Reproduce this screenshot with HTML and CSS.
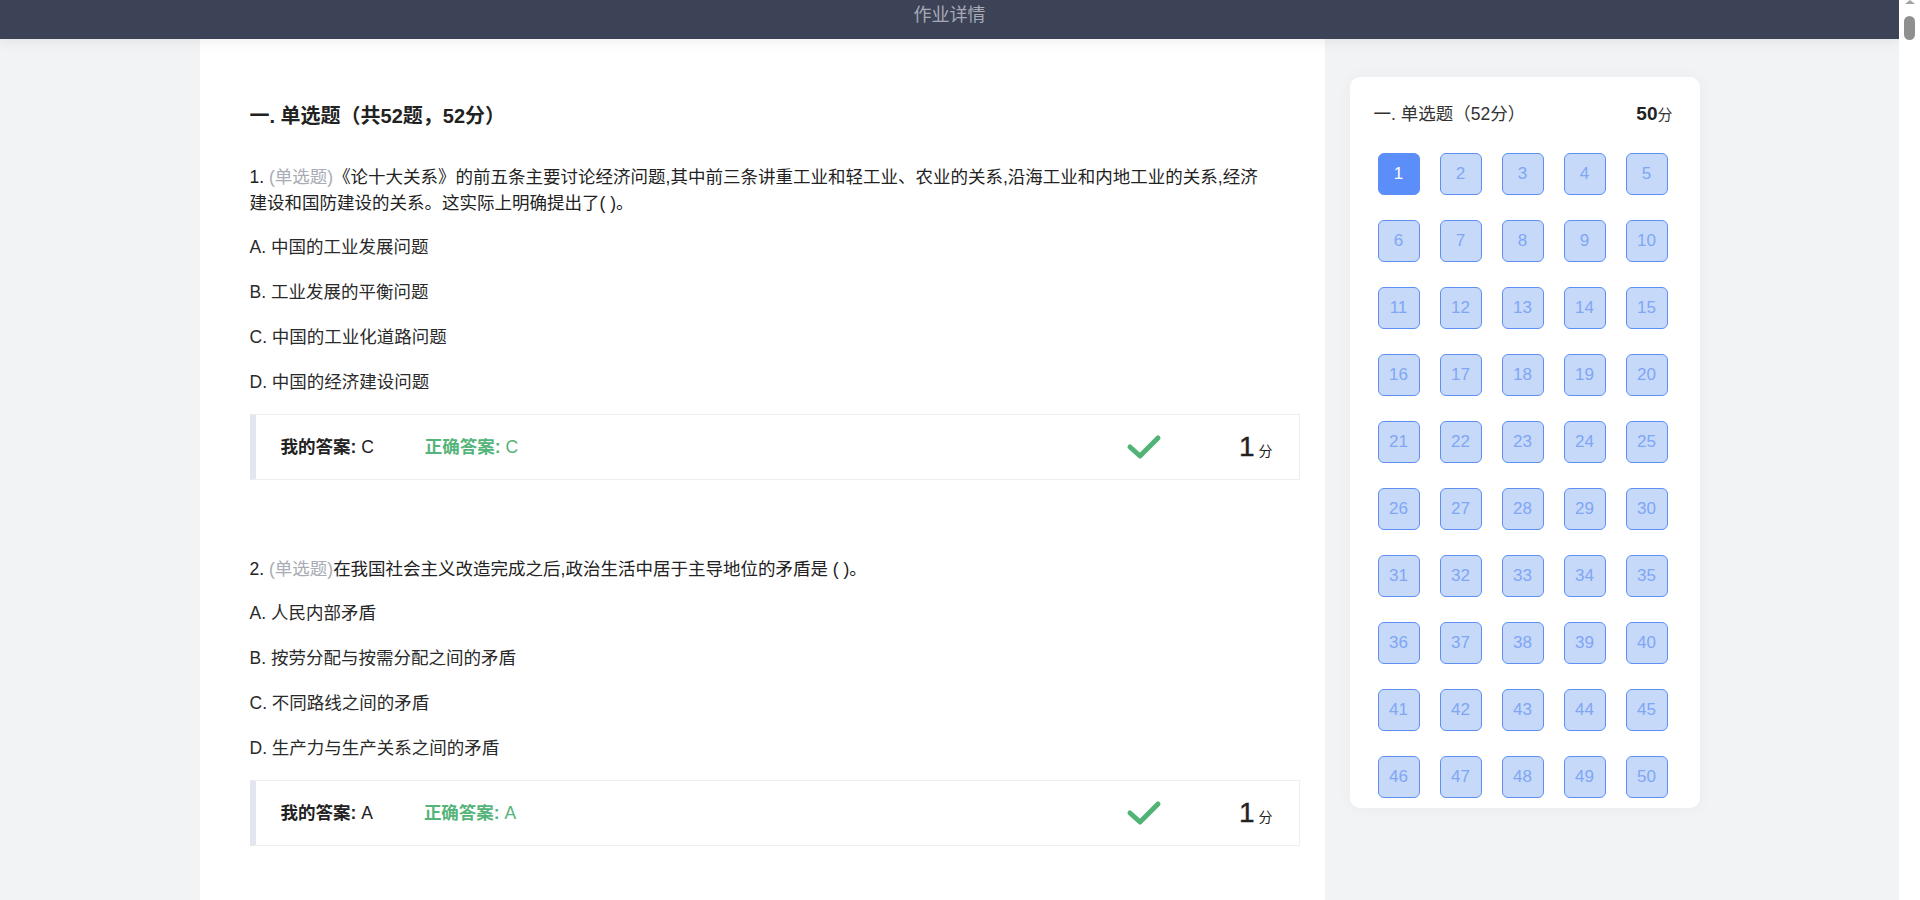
FILE: index.html
```html
<!DOCTYPE html>
<html lang="zh-CN">
<head>
    <meta charset="UTF-8">
    <meta name="viewport" content="width=device-width, initial-scale=1.0">
    <title>作业详情</title>
    <link rel="stylesheet" href="styles.css">
</head>
<body>
    <div class="header">作业详情</div>

    <div class="wrap">
        <div class="main">
            <h2 class="type-title">一. 单选题（共52题，52分）</h2>

            <div class="question">
                <div class="q-title"><span>1. </span><span class="q-type">(单选题)</span><span>《论十大关系》的前五条主要讨论经济问题,其中前三条讲重工业和轻工业、农业的关系,沿海工业和内地工业的关系,经济建设和国防建设的关系。这实际上明确提出了( )。</span></div>
                <div class="option">A. 中国的工业发展问题</div>
                <div class="option">B. 工业发展的平衡问题</div>
                <div class="option">C. 中国的工业化道路问题</div>
                <div class="option">D. 中国的经济建设问题</div>
                <div class="answer">
                    <span class="my-answer"><b>我的答案:</b> C</span>
                    <span class="right-answer"><b>正确答案:</b> C</span>
                    <svg class="check" width="38" height="28" viewBox="0 0 38 28">
                        <polyline points="5,14 15,23 33,5" fill="none" stroke="#52b377" stroke-width="5" stroke-linecap="round" stroke-linejoin="round"/>
                    </svg>
                    <span class="score">1<small>分</small></span>
                </div>
            </div>

            <div class="question">
                <div class="q-title"><span>2. </span><span class="q-type">(单选题)</span><span>在我国社会主义改造完成之后,政治生活中居于主导地位的矛盾是 ( )。</span></div>
                <div class="option">A. 人民内部矛盾</div>
                <div class="option">B. 按劳分配与按需分配之间的矛盾</div>
                <div class="option">C. 不同路线之间的矛盾</div>
                <div class="option">D. 生产力与生产关系之间的矛盾</div>
                <div class="answer">
                    <span class="my-answer"><b>我的答案:</b> A</span>
                    <span class="right-answer"><b>正确答案:</b> A</span>
                    <svg class="check" width="38" height="28" viewBox="0 0 38 28">
                        <polyline points="5,14 15,23 33,5" fill="none" stroke="#52b377" stroke-width="5" stroke-linecap="round" stroke-linejoin="round"/>
                    </svg>
                    <span class="score">1<small>分</small></span>
                </div>
            </div>
        </div>

        <div class="side">
            <div class="side-head">
                <span>一. 单选题（52分）</span>
                <span class="side-score"><b>50</b>分</span>
            </div>
            <div class="num-grid">
                <span class="num current">1</span>
                <span class="num">2</span>
                <span class="num">3</span>
                <span class="num">4</span>
                <span class="num">5</span>
                <span class="num">6</span>
                <span class="num">7</span>
                <span class="num">8</span>
                <span class="num">9</span>
                <span class="num">10</span>
                <span class="num">11</span>
                <span class="num">12</span>
                <span class="num">13</span>
                <span class="num">14</span>
                <span class="num">15</span>
                <span class="num">16</span>
                <span class="num">17</span>
                <span class="num">18</span>
                <span class="num">19</span>
                <span class="num">20</span>
                <span class="num">21</span>
                <span class="num">22</span>
                <span class="num">23</span>
                <span class="num">24</span>
                <span class="num">25</span>
                <span class="num">26</span>
                <span class="num">27</span>
                <span class="num">28</span>
                <span class="num">29</span>
                <span class="num">30</span>
                <span class="num">31</span>
                <span class="num">32</span>
                <span class="num">33</span>
                <span class="num">34</span>
                <span class="num">35</span>
                <span class="num">36</span>
                <span class="num">37</span>
                <span class="num">38</span>
                <span class="num">39</span>
                <span class="num">40</span>
                <span class="num">41</span>
                <span class="num">42</span>
                <span class="num">43</span>
                <span class="num">44</span>
                <span class="num">45</span>
                <span class="num">46</span>
                <span class="num">47</span>
                <span class="num">48</span>
                <span class="num">49</span>
                <span class="num">50</span>
            </div>
        </div>
    </div>
</body>
</html>
```

FILE: styles.css
```css
html {
    background-color: #fff;
}

body {
    margin: 0 21px 0 0;
    background-color: #f2f3f5;
    font-family: "Liberation Sans", "Noto Sans CJK SC", sans-serif;
    color: #222;
}

/* window scrollbar strip */
body::before {
    content: "";
    position: fixed;
    top: 0;
    right: 5px;
    border-left: 5px solid transparent;
    border-right: 5px solid transparent;
    border-bottom: 4px solid #a3a3a3;
}

body::after {
    content: "";
    position: fixed;
    top: 16px;
    right: 5px;
    width: 11px;
    height: 24px;
    border-radius: 6px;
    background-color: #8f8f8f;
}

.header {
    position: relative;
    z-index: 2;
    height: 39px;
    line-height: 30px;
    text-align: center;
    font-size: 18px;
    color: #a7aab6;
    background-color: #3d4356;
    box-shadow: 0 3px 12px rgba(0, 0, 0, 0.07);
}

.wrap {
    display: flex;
    align-items: flex-start;
    gap: 25px;
    width: 1500px;
    margin: 0 auto;
}

/* left: question list */
.main {
    width: 1125px;
    min-height: 1200px;
    box-sizing: border-box;
    padding: 64px 25px 40px 50px;
    background-color: #fff;
}

.type-title {
    margin: 0 0 35px;
    font-size: 20px;
    line-height: 26px;
    font-weight: bold;
}

.question {
    margin-bottom: 76px;
    font-size: 17.5px;
    line-height: 26px;
}

.q-title {
    padding-right: 35px;
    margin-bottom: 18px;
}

.q-type {
    color: #a9acb4;
}

.option {
    margin-bottom: 19px;
    color: #2a2a2a;
}

.answer {
    display: flex;
    align-items: center;
    height: 64px;
    margin-top: 2px;
    padding: 0 26px 0 25px;
    border: 1px solid #eeeff2;
    border-left: 6px solid #e3e6ef;
}

.answer b {
    font-weight: bold;
}

.my-answer {
    margin-right: 51px;
}

.right-answer {
    color: #55b47a;
}

.check {
    margin-left: auto;
}

.score {
    margin-left: 76px;
    padding-top: 4px;
    font-size: 28px;
    line-height: 30px;
    -webkit-text-stroke: 0.4px #222;
}

.score small {
    margin-left: 4px;
    font-size: 14px;
    -webkit-text-stroke: 0;
}

/* right: answer sheet */
.side {
    width: 350px;
    box-sizing: border-box;
    margin-top: 38px;
    padding: 24px 27px 10px 24px;
    background-color: #fff;
    border-radius: 10px;
    box-shadow: 0 0 16px rgba(0, 0, 0, 0.04);
}

.side-head {
    display: flex;
    justify-content: space-between;
    align-items: baseline;
    font-size: 17.5px;
    line-height: 26px;
    color: #333;
}

.side-score b {
    font-size: 19px;
    color: #222;
}

.side-score {
    font-size: 15px;
}

.num-grid {
    display: grid;
    grid-template-columns: repeat(5, 42px);
    column-gap: 20px;
    row-gap: 25px;
    margin-top: 25px;
    padding-left: 4px;
}

.num {
    display: flex;
    align-items: center;
    justify-content: center;
    height: 42px;
    box-sizing: border-box;
    font-size: 17px;
    color: #80a6f4;
    background-color: #c6d9f9;
    border: 1px solid #5d8ff5;
    border-radius: 6px;
}

.num.current {
    color: #fff;
    background-color: #5b8ef8;
    border-color: #5b8ef8;
}
```
